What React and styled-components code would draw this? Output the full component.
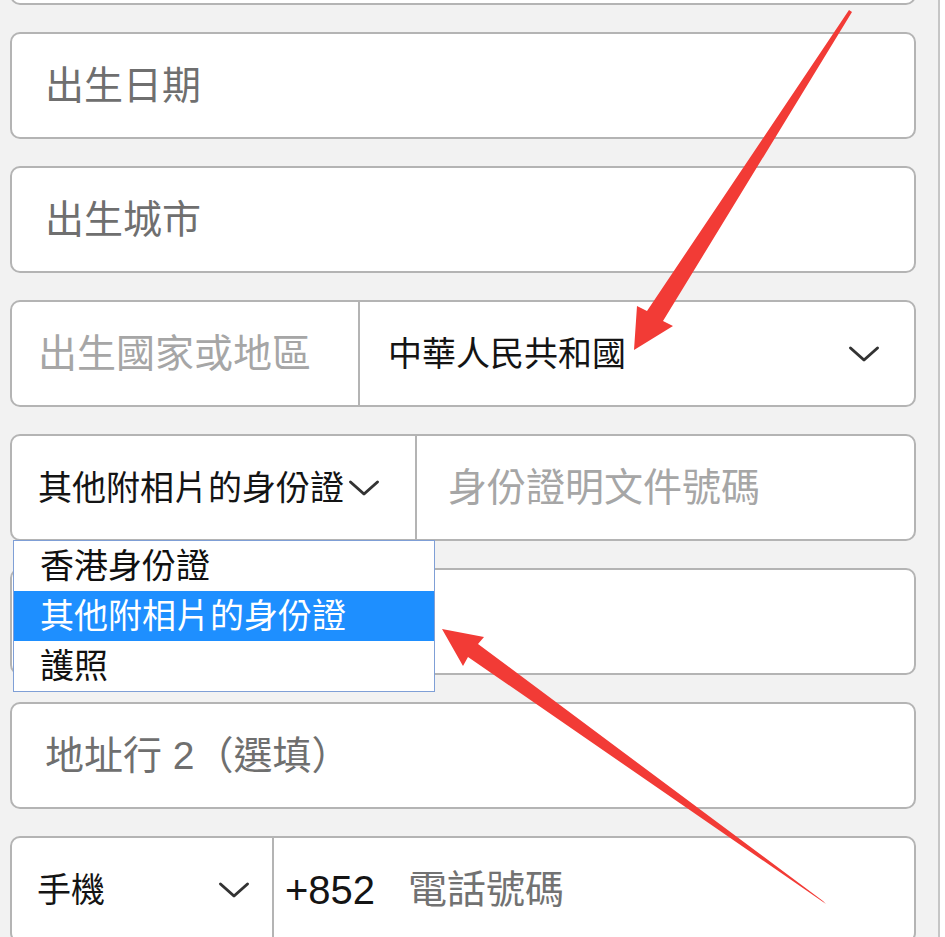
import React from "react";
import styled, { createGlobalStyle } from "styled-components";

const GlobalStyle = createGlobalStyle`
  html, body {
    margin: 0;
    padding: 0;
    background: #ffffff;
    overflow: hidden;
  }
  body {
    font-family: "Liberation Sans", "Noto Sans CJK TC", sans-serif;
  }
`;

const Screen = styled.div`
  position: relative;
  display: flex;
  width: 945px;
  height: 937px;
  overflow: hidden;
  background: #ffffff;
`;

const Column = styled.div`
  box-sizing: border-box;
  width: 940px;
  height: 937px;
  flex-shrink: 0;
  background: #f2f2f2;
  border-right: 2px solid #c6c6c6;
  padding-left: 10px;
  display: flex;
  flex-direction: column;
  gap: 27px;
`;

const Field = styled.div`
  position: relative;
  z-index: ${(p) => (p.$raised ? 2 : "auto")};
  box-sizing: border-box;
  width: 906px;
  height: 107px;
  flex-shrink: 0;
  margin-top: ${(p) => (p.$clipped ? "-102px" : "0")};
  background: #ffffff;
  border: 2px solid #b4b4b4;
  border-radius: 10px;
  display: flex;
  align-items: center;
`;

const Segment = styled.div`
  box-sizing: border-box;
  height: 100%;
  display: flex;
  align-items: center;
  flex: ${(p) => (p.$width ? `0 0 ${p.$width}px` : "1 1 auto")};
  padding-left: ${(p) => p.$padLeft || 0}px;
  padding-right: ${(p) => p.$padRight || 0}px;
  border-right: ${(p) => (p.$divider ? "2px solid #b4b4b4" : "none")};
  justify-content: ${(p) => (p.$spread ? "space-between" : "flex-start")};
`;

const Placeholder = styled.span`
  font-size: 39px;
  color: ${(p) => p.$tone || "#6f6f6f"};
  white-space: nowrap;
  line-height: 1;
`;

const Value = styled.span`
  font-size: ${(p) => p.$size || 34}px;
  color: #141414;
  white-space: nowrap;
  line-height: 1;
  margin-right: ${(p) => p.$gap || 0}px;
`;

const Menu = styled.ul`
  position: absolute;
  left: 1px;
  top: 104px;
  box-sizing: border-box;
  width: 422px;
  height: 152px;
  margin: 0;
  padding: 0;
  list-style: none;
  background: #ffffff;
  border: 1px solid #7f9fd6;
`;

const Option = styled.li`
  box-sizing: border-box;
  height: 50px;
  display: flex;
  align-items: center;
  padding-left: 26px;
  font-size: 34px;
  line-height: 1;
  background: ${(p) => (p.$active ? "#1e8fff" : "#ffffff")};
  color: ${(p) => (p.$active ? "#ffffff" : "#111111")};
`;

const Overlay = styled.svg`
  position: absolute;
  left: 0;
  top: 0;
  width: 945px;
  height: 937px;
  pointer-events: none;
  z-index: 5;
`;

const Chevron = () => (
  <svg width="32" height="18" viewBox="0 0 32 18" aria-hidden="true">
    <path
      d="M2.5 3 L16 15 L29.5 3"
      fill="none"
      stroke="#333333"
      strokeWidth="3"
      strokeLinecap="round"
      strokeLinejoin="round"
    />
  </svg>
);

export default function App() {
  return (
    <>
      <GlobalStyle />
      <Screen>
        <Column>
          <Field $clipped />
          <Field>
            <Segment $padLeft={33}>
              <Placeholder>出生日期</Placeholder>
            </Segment>
          </Field>
          <Field>
            <Segment $padLeft={33}>
              <Placeholder>出生城市</Placeholder>
            </Segment>
          </Field>
          <Field>
            <Segment $width={348} $padLeft={26} $divider>
              <Placeholder $tone="#a6a6a6">出生國家或地區</Placeholder>
            </Segment>
            <Segment $padLeft={28} $padRight={34} $spread>
              <Value>中華人民共和國</Value>
              <Chevron />
            </Segment>
          </Field>
          <Field $raised>
            <Segment $width={405} $padLeft={26} $divider>
              <Value $gap={4}>其他附相片的身份證</Value>
              <Chevron />
            </Segment>
            <Segment $padLeft={31}>
              <Placeholder $tone="#a6a6a6">身份證明文件號碼</Placeholder>
            </Segment>
            <Menu>
              <Option>香港身份證</Option>
              <Option $active>其他附相片的身份證</Option>
              <Option>護照</Option>
            </Menu>
          </Field>
          <Field />
          <Field>
            <Segment $padLeft={33}>
              <Placeholder>地址行 2（選填）</Placeholder>
            </Segment>
          </Field>
          <Field>
            <Segment $width={262} $padLeft={25} $padRight={22} $divider $spread>
              <Value>手機</Value>
              <Chevron />
            </Segment>
            <Segment $padLeft={11}>
              <Value $size={40} $gap={33}>+852</Value>
              <Placeholder $tone="#727272">電話號碼</Placeholder>
            </Segment>
          </Field>
        </Column>
        <Overlay viewBox="0 0 945 937">
          <polygon
            fill="#f23b36"
            points="849,10 852,12 663,321 673,326 634,350 637,306 647,311"
          />
          <polygon
            fill="#f23b36"
            points="826,904 823,901 478,644 484,637 442,629 463,666 468,657"
          />
        </Overlay>
      </Screen>
    </>
  );
}
